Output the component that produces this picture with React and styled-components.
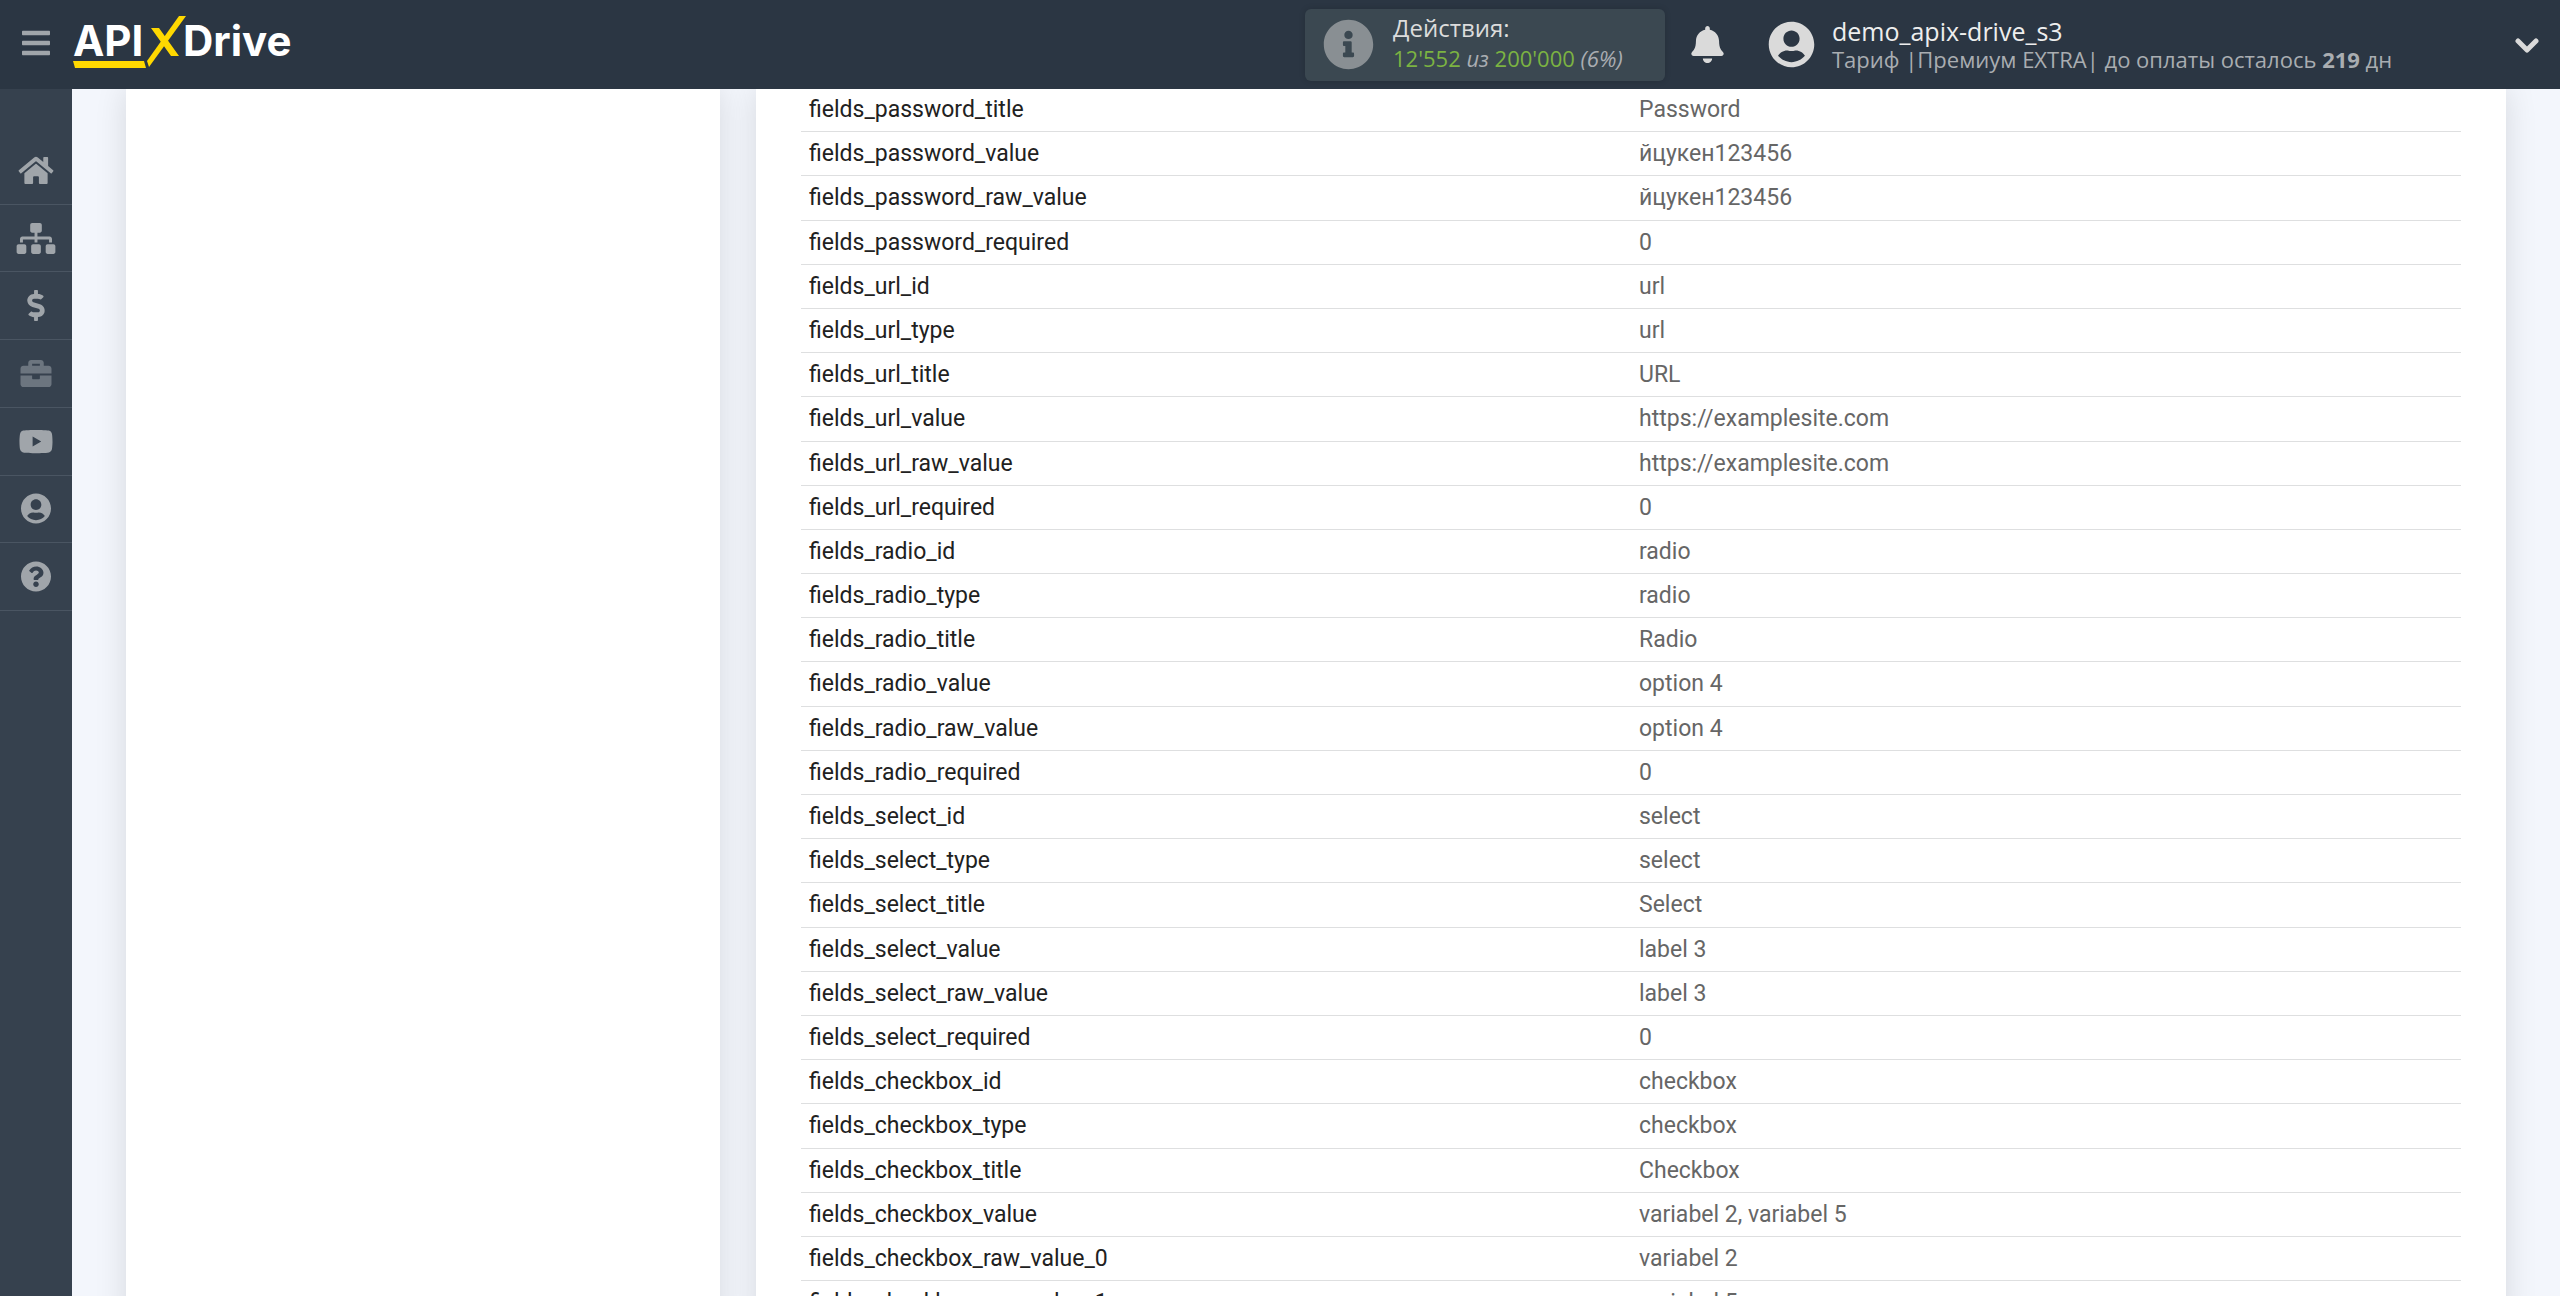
import React from "react";
import styled, { createGlobalStyle } from "styled-components";
import {
  FaHome,
  FaSitemap,
  FaDollarSign,
  FaBriefcase,
  FaYoutube,
  FaUserCircle,
  FaQuestionCircle,
  FaInfoCircle,
  FaBell,
  FaBars,
} from "react-icons/fa";

const GlobalStyle = createGlobalStyle`
  *, *::before, *::after { box-sizing: border-box; }
  body {
    margin: 0;
    background: #f3f6fc;
    font-family: Roboto, "Liberation Sans", sans-serif;
  }
  button { margin: 0; padding: 0; border: 0; background: none; font: inherit; cursor: pointer; }
`;

const Shell = styled.div`
  display: flex;
  flex-direction: column;
  height: 100vh;
  overflow: hidden;
`;

const Header = styled.header`
  position: relative;
  z-index: 2;
  flex: none;
  display: flex;
  align-items: center;
  height: 89px;
  padding-right: 20px;
  background: #2b3643;
  font-family: "Open Sans", "Noto Sans", sans-serif;
`;

const MenuButton = styled.button`
  display: flex;
  justify-content: center;
  width: 72px;
  padding-bottom: 4px;
  font-size: 32px;
  color: #a0a5aa;
`;

const LogoLink = styled.a`
  display: block;
  width: 224px;
  height: 61px;
`;

const LogoText = styled.text`
  font-family: Inter, sans-serif;
  font-size: 42px;
  font-weight: 700;
  fill: #fff;
`;

const HeaderRight = styled.div`
  display: flex;
  align-items: center;
  margin-left: auto;
  width: 1235px;
`;

const Usage = styled.button`
  display: flex;
  align-items: center;
  gap: 19px;
  width: 360px;
  height: 72px;
  padding: 0 18px;
  border-radius: 6px;
  background: #3b4851;
  box-shadow: 0 0 6px rgba(0, 0, 0, 0.15);
  color: #898f93;
  font-size: 51px;
  text-align: left;
`;

const Lines = styled.span`
  display: flex;
  flex-direction: column;
  padding-bottom: ${(p) => (p.$wide ? 4 : 0)}px;
  font-size: 22px;
  line-height: ${(p) => (p.$wide ? 30 : 28)}px;
  color: #a9adb1;
`;

const Title = styled.span`
  font-size: 24px;
  color: #dcdcdc;
`;

const UserName = styled(Title)`
  font-size: 25px;
  color: #eee;
`;

const Count = styled.span`
  color: #7cb342;
`;

const BellButton = styled.button`
  display: flex;
  justify-content: center;
  width: 84px;
  font-size: 37px;
  color: #dadada;
`;

const UserButton = styled.button`
  flex: 1;
  display: flex;
  align-items: center;
  gap: 17px;
  padding-left: 19px;
  color: #dadada;
  font-size: 47px;
  text-align: left;
`;

const Chevron = styled.svg`
  margin-left: auto;
  fill: none;
  stroke: currentColor;
  stroke-width: 5;
  stroke-linecap: round;
  stroke-linejoin: round;
`;

const Body = styled.div`
  flex: 1;
  display: flex;
  min-height: 0;
`;

const Sidebar = styled.nav`
  flex: none;
  width: 72px;
  padding-top: 48px;
  background: #36414e;
`;

const NavList = styled.ul`
  display: grid;
  grid-auto-rows: 1fr;
  height: 474px;
  margin: 0;
  padding: 0;
  list-style: none;
`;

const NavItem = styled.a`
  display: flex;
  align-items: center;
  justify-content: center;
  height: 100%;
  border-bottom: 1px solid #4a5562;
  color: ${(p) => (p.$dim ? "#6c757f" : "#a0a5aa")};

  svg {
    width: 40px;
    height: 31px;
  }
`;

const Main = styled.main`
  flex: 1;
  display: grid;
  grid-template-columns: 594fr 1750fr;
  gap: 36px;
  padding: 0 54px;
  overflow: hidden;
`;

const Card = styled.section`
  padding: 0 45px;
  background: #fff;
  box-shadow: 0 0 30px rgba(0, 0, 0, 0.12);
`;

const Table = styled.table`
  width: 100%;
  margin-top: -1px;
  table-layout: fixed;
  border-spacing: 0;
  font-size: 23px;
  line-height: 1.4;
`;

const Name = styled.th`
  padding: 6px 8px 5px;
  border-bottom: 1px solid #dedfe0;
  font-weight: 400;
  text-align: left;
  color: #212121;
`;

const Value = styled.td`
  padding: 6px 8px 5px;
  border-bottom: 1px solid #dedfe0;
  color: #666;
`;

const NAV = [
  { label: "Главная", icon: FaHome },
  { label: "Связи", icon: FaSitemap },
  { label: "Оплата", icon: FaDollarSign },
  { label: "Проекты", icon: FaBriefcase, dim: true },
  { label: "Видео", icon: FaYoutube },
  { label: "Профиль", icon: FaUserCircle },
  { label: "Помощь", icon: FaQuestionCircle },
];

const ROWS = [
  ["fields_password_title", "Password"],
  ["fields_password_value", "йцукен123456"],
  ["fields_password_raw_value", "йцукен123456"],
  ["fields_password_required", "0"],
  ["fields_url_id", "url"],
  ["fields_url_type", "url"],
  ["fields_url_title", "URL"],
  ["fields_url_value", "https://examplesite.com"],
  ["fields_url_raw_value", "https://examplesite.com"],
  ["fields_url_required", "0"],
  ["fields_radio_id", "radio"],
  ["fields_radio_type", "radio"],
  ["fields_radio_title", "Radio"],
  ["fields_radio_value", "option 4"],
  ["fields_radio_raw_value", "option 4"],
  ["fields_radio_required", "0"],
  ["fields_select_id", "select"],
  ["fields_select_type", "select"],
  ["fields_select_title", "Select"],
  ["fields_select_value", "label 3"],
  ["fields_select_raw_value", "label 3"],
  ["fields_select_required", "0"],
  ["fields_checkbox_id", "checkbox"],
  ["fields_checkbox_type", "checkbox"],
  ["fields_checkbox_title", "Checkbox"],
  ["fields_checkbox_value", "variabel 2, variabel 5"],
  ["fields_checkbox_raw_value_0", "variabel 2"],
  ["fields_checkbox_raw_value_1", "variabel 5"],
];

function Logo() {
  return (
    <svg width="224" height="61" viewBox="0 0 224 61" role="img" aria-label="APIXDrive">
      <LogoText x="1" y="42">API</LogoText>
      <LogoText x="111" y="42">Drive</LogoText>
      <path fill="#ffd800" d="M1 47h71l2 7H3zM79 14h8l20 28h-8z" />
      <path fill="#ffd800" d="M107 2h7L77 53l-2-6z" />
    </svg>
  );
}

export default function App() {
  return (
    <>
      <GlobalStyle />
      <Shell>
        <Header>
          <MenuButton aria-label="Меню"><FaBars /></MenuButton>
          <LogoLink href="#"><Logo /></LogoLink>
          <HeaderRight>
            <Usage>
              <FaInfoCircle />
              <Lines $wide>
                <Title>Действия:</Title>
                <span>
                  <Count>12'552</Count> <em>из</em> <Count>200'000</Count> <em>(6%)</em>
                </span>
              </Lines>
            </Usage>
            <BellButton aria-label="Уведомления"><FaBell /></BellButton>
            <UserButton>
              <FaUserCircle />
              <Lines>
                <UserName>demo_apix-drive_s3</UserName>
                <span>
                  Тариф |Премиум EXTRA| до оплаты осталось <b>219</b> дн
                </span>
              </Lines>
              <Chevron width="26" height="16" viewBox="0 0 26 16" aria-hidden="true">
                <path d="M4 4l9 9 9-9" />
              </Chevron>
            </UserButton>
          </HeaderRight>
        </Header>
        <Body>
          <Sidebar>
            <NavList>
              {NAV.map(({ label, icon: Icon, dim }) => (
                <li key={label}>
                  <NavItem href="#" aria-label={label} $dim={dim}>
                    <Icon />
                  </NavItem>
                </li>
              ))}
            </NavList>
          </Sidebar>
          <Main>
            <Card />
            <Card>
              <Table>
                <tbody>
                  {ROWS.map(([name, value]) => (
                    <tr key={name}>
                      <Name scope="row">{name}</Name>
                      <Value>{value}</Value>
                    </tr>
                  ))}
                </tbody>
              </Table>
            </Card>
          </Main>
        </Body>
      </Shell>
    </>
  );
}
